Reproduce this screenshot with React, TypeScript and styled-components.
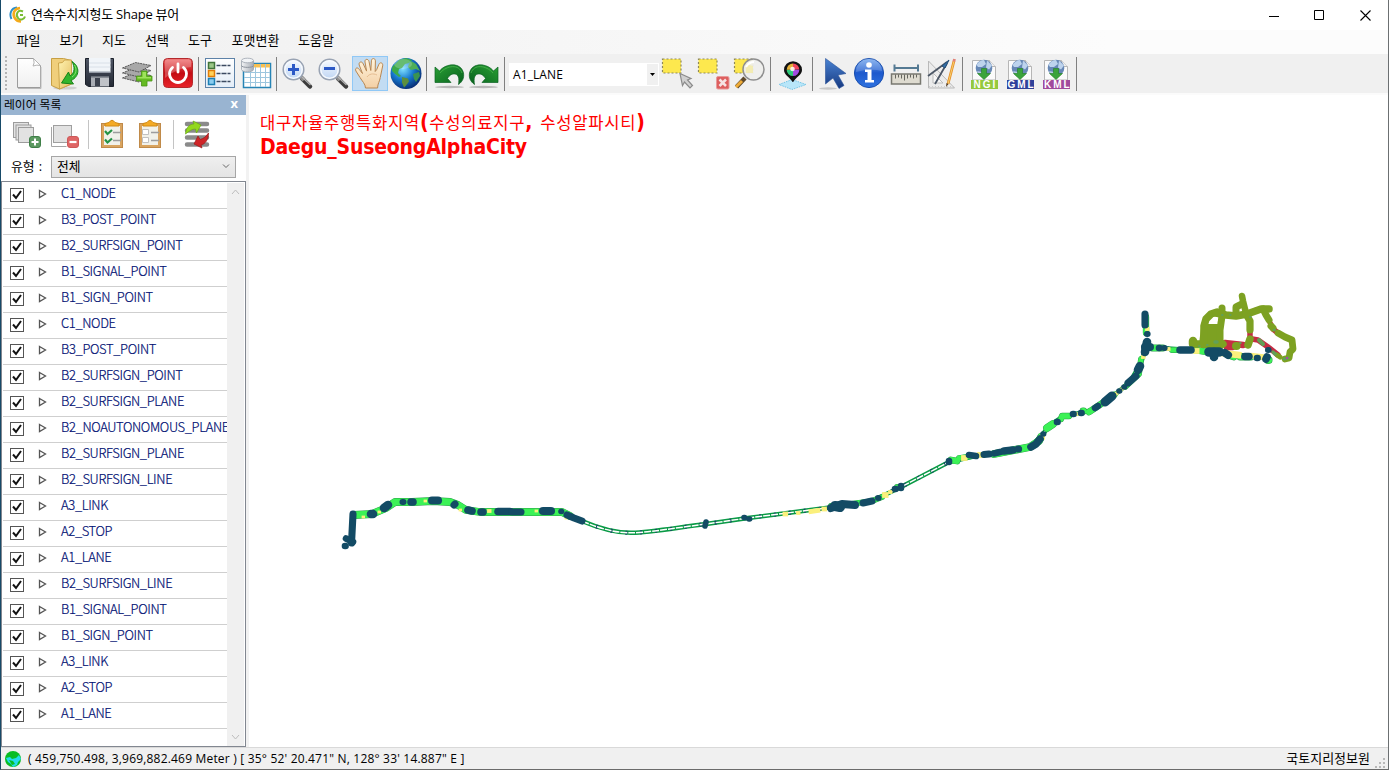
import React from "react";
import styled, { createGlobalStyle } from "styled-components";

const uiFont = `"Open Sans", "Noto Sans CJK KR", sans-serif`;

const GlobalStyle = createGlobalStyle`
  * { box-sizing: border-box; }
  html, body { margin: 0; padding: 0; }
  body { background: #fff; font-family: ${uiFont}; font-size: 12px; color: #000; overflow: hidden; }
  svg { display: block; flex: none; }
`;

const Window = styled.div`
  width: 1389px;
  height: 770px;
  display: flex;
  flex-direction: column;
  background: #fff;
  border-left: 1px solid #174a68;
  border-right: 1px solid #6c7072;
  border-bottom: 1px solid #6b6b6b;
`;

const TitleBar = styled.header`
  height: 30px;
  display: flex;
  align-items: center;
  padding-left: 8px;
`;
const Title = styled.span`
  margin-left: 5px;
  font-size: 13px;
  line-height: 28px;
  height: 30px;
  letter-spacing: -0.25px;
  white-space: nowrap;
`;
const Caption = styled.div`
  margin-left: auto;
  display: flex;
`;
const CaptionButton = styled.div`
  width: 46px;
  height: 28px;
  display: flex;
  align-items: center;
  justify-content: center;
`;

const MenuBar = styled.nav`
  height: 24px;
  display: flex;
  gap: 19px;
  padding-left: 14px;
  font-size: 13px;
  background: linear-gradient(90deg, #f0f0f0, #fcfcfc 80%);
`;
const MenuItem = styled.span<{ $w: number }>`
  width: ${(p) => p.$w}px;
  display: flex;
  justify-content: center;
  line-height: 21px;
  white-space: nowrap;
`;

const ToolBar = styled.div`
  height: 41px;
  display: flex;
  align-items: flex-start;
  padding: 2px 0 0 3px;
  background: #f0f0f0;
  border-bottom: 2px solid #fbfbfb;
`;
const Grip = styled.div`
  width: 3px;
  height: 34px;
  margin: 0 2px 0 1px;
  background: radial-gradient(circle at 1px 1px, #b4b4b4 1px, transparent 1.3px) 0 0 / 3px 4px;
`;
const ToolButton = styled.div<{ $active?: boolean }>`
  width: 36px;
  height: 35px;
  background: ${(p) => (p.$active ? "#c2dcf3" : "transparent")};
  box-shadow: ${(p) => (p.$active ? "inset 0 0 0 1px #90c8f6" : "none")};
`;
const Separator = styled.div`
  width: 6px;
  height: 35px;
  background: linear-gradient(#808080, #808080) 2px 1px / 1px 34px no-repeat;
`;
const LayerCombo = styled.div`
  width: 150px;
  height: 23px;
  margin: 7px 1px 0;
  padding: 0 0 0 4px;
  display: flex;
  justify-content: space-between;
  line-height: 23px;
  letter-spacing: 0.1px;
  background: #fff;
`;
const ComboArrow = styled.div`
  width: 11px;
  height: 21px;
  margin: 1px 1px 0 0;
  display: flex;
  align-items: center;
  justify-content: center;
  background: #f0f0f0;
`;

const Body = styled.main`
  flex: 1;
  min-height: 0;
  display: flex;
`;
const SidePanel = styled.aside`
  width: 245px;
  display: flex;
  flex-direction: column;
`;
const PanelHeader = styled.div`
  height: 20px;
  display: flex;
  justify-content: space-between;
  padding: 0 8px 0 3px;
  line-height: 19px;
  font-size: 11.8px;
  background: #99b4d1;
`;
const CloseMark = styled.span`
  color: #fff;
  font: bold 13px/17px "Open Sans", sans-serif;
`;
const LayerTools = styled.div`
  height: 41px;
  display: flex;
  padding: 1px 0 0 7px;
`;
const LayerTool = styled.div`
  width: 38px;
  height: 36px;
`;
const LayerToolSeparator = styled.div`
  width: 1px;
  height: 29px;
  margin: 4px 4px 0;
  background: #c4c4c4;
`;
const TypeRow = styled.div`
  height: 25px;
  display: flex;
  padding-left: 10px;
  font-size: 12.8px;
`;
const TypeLabel = styled.span`
  width: 40px;
  line-height: 20px;
  white-space: pre;
  word-spacing: 1px;
`;
const TypeSelect = styled.div`
  width: 185px;
  height: 22px;
  display: flex;
  justify-content: space-between;
  align-items: center;
  padding: 0 5px 3px;
  border: 1px solid #a6a6a6;
  background: linear-gradient(#efefef, #e4e4e4);
`;
const ListBox = styled.div`
  flex: 1;
  min-height: 0;
  display: flex;
  border: 1px solid #828790;
  padding-top: 1px;
`;
const Rows = styled.div`
  flex: 1;
  min-width: 0;
  padding-left: 1px;
  overflow: hidden;
`;
const Row = styled.div`
  height: 26px;
  display: flex;
  border-bottom: 1px solid #cfcfcf;
`;
const CheckBox = styled.span`
  width: 14px;
  height: 14px;
  flex: none;
  margin: 5px 14px 0 7px;
  border: 1px solid #555;
  background: #fff;
`;
const RowName = styled.span`
  margin-left: 14px;
  color: #000f72;
  font: 300 13px/19px "Noto Sans CJK KR", sans-serif;
  -webkit-text-stroke: 0.2px #000f72;
  letter-spacing: -0.36px;
  white-space: nowrap;
`;
const ScrollBar = styled.div`
  width: 17px;
  margin-right: 1px;
  display: flex;
  flex-direction: column;
  justify-content: space-between;
  align-items: center;
  padding: 6px 0;
  background: #f0f0f0;
`;
const Splitter = styled.div`
  width: 3px;
  background: #f2f2f2;
`;
const MapPane = styled.section`
  position: relative;
  flex: 1;
  min-width: 0;
`;
const MapTitle = styled.div`
  position: absolute;
  left: 11px;
  top: 15px;
  color: #f00;
  white-space: nowrap;
`;
const KoreanTitle = styled.div`
  height: 25px;
  font: 16.6px/25px "Noto Sans CJK KR", sans-serif;
  letter-spacing: 0.72px;
`;
const Punct = styled.b`
  font: bold 21px/25px "DejaVu Sans Condensed", "DejaVu Sans", sans-serif;
`;
const LatinTitle = styled.div`
  font: bold 21px/25px "DejaVu Sans Condensed", "DejaVu Sans", sans-serif;
  letter-spacing: -0.2px;
`;
const StatusBar = styled.footer`
  height: 22px;
  display: flex;
  align-items: flex-start;
  padding: 0 2px 0 4px;
  background: #f0f0f0;
  border-top: 1px solid #d9d9d9;
  line-height: 21px;
`;
const Coordinates = styled.span`
  margin-left: 7px;
  letter-spacing: 0.19px;
  white-space: pre;
`;
const Agency = styled.span`
  margin-left: auto;
  margin-right: 3px;
  font-size: 13px;
  line-height: 20px;
  white-space: nowrap;
`;

const G = ({ id, stops, x2 = 0, y2 = 1 }: { id: string; stops: string[]; x2?: number; y2?: number }) => (
  <linearGradient id={id} x1="0" y1="0" x2={x2} y2={y2}>
    {stops.map((c, i) => (
      <stop key={i} offset={i / (stops.length - 1)} stopColor={c} />
    ))}
  </linearGradient>
);
const Icon = ({ children }: { children: React.ReactNode }) => (
  <svg width="36" height="35" viewBox="0 0 36 35">{children}</svg>
);

const NewIcon = () => (
  <Icon>
    <G id="page" stops={["#ffffff", "#f0f0f0"]} />
    <path d="M7.5 2.5h16l7 7v22h-23z" fill="url(#page)" stroke="#9c9c9c" />
    <path d="M8 32.5h23V11" fill="none" stroke="#bbb" />
    <path d="M23.5 2.5q1.5 5-.5 7.5 4-1.500 7.500-.5z" fill="#fff" stroke="#b4b4b4" />
  </Icon>
);
const OpenIcon = () => (
  <Icon>
    <G id="fold" stops={["#fff3b0", "#e3bd62"]} x2={1} />
    <ellipse cx="19" cy="32" rx="12" ry="1.600" fill="#cfcfcf" />
    <path d="M5.500 2.500h12l8 2V28l-12 5-8-3.500z" fill="#f0cf7b" stroke="#c79f43" />
    <path d="M12.500 7l4-.5 2-2.500 7 0V28l-12 5z" fill="url(#fold)" stroke="#cda64c" />
    <path d="M26 5.500c8 5 8 15-1 19l2.500 3.500-12-1 7-11 1.500 4c5-3 5-9 2-14.500z" fill="#32b52d" stroke="#178319" />
    <path d="M28.500 9c2.500 4 2 9-2.500 12" fill="none" stroke="#85e36d" />
  </Icon>
);
const SaveIcon = () => (
  <Icon>
    <G id="disk" stops={["#4e5564", "#252a35"]} />
    <path d="M3.500 2.500h28v28h-25l-3-2z" fill="url(#disk)" stroke="#1b202a" />
    <path d="M7 2h21.500v14.500H7z" fill="#f1f5f9" />
    <path d="M7 7h21.500M7 11h21.500" stroke="#d9e0e8" />
    <path d="M7 16h21.500" stroke="#8f98a5" />
    <path d="M9 20h18v10.500H9z" fill="#a9adb4" />
    <path d="M9 20h18v1.500H9z" fill="#696f79" />
    <path d="M13 22h5v8h-5z" fill="#3b414d" />
    <path d="M18 22h9v8h-9z" fill="#d0d2d5" opacity=".6" />
  </Icon>
);
const AddLayerIcon = () => (
  <Icon>
    {[18, 13, 8].map((y) => (
      <path key={y} d={`M4.500 ${y + 4}l13-5.500 15.500 3-12 6.500z`} fill="#a8a8a8" stroke="#4b4b4b" strokeWidth=".9" strokeDasharray="2 .7" />
    ))}
    <path d="M23.500 15h5.500v5h5v5h-5v5h-5.500v-5h-5v-5h5z" fill="#65bb22" stroke="#4a9317" strokeWidth=".8" />
    <path d="M24.500 16h3.500v5h5v1.500H19.500V21h5z" fill="#9ee35b" />
  </Icon>
);
const PowerIcon = () => (
  <Icon>
    <G id="power" stops={["#f06a6a", "#c40b12", "#e8242a"]} />
    <rect x="3.500" y="2.500" width="29" height="29" rx="4" fill="url(#power)" stroke="#b4292c" />
    <path d="M5 5q0-1.500 2-1.500h22q2 0 2 2V11Q17 12 5 22z" fill="#fff" opacity=".25" />
    <path d="M12.500 11.500a8.500 8.500 0 1 0 11 0" fill="none" stroke="#fff" strokeWidth="2.800" strokeLinecap="round" />
    <path d="M18 8v8" stroke="#fff" strokeWidth="2.800" strokeLinecap="round" />
  </Icon>
);
const LegendIcon = () => (
  <Icon>
    <G id="legend" stops={["#ffffff", "#e3edf8"]} />
    <rect x="3.500" y="2.500" width="29" height="29" fill="url(#legend)" stroke="#5d82a8" />
    {[
      [6, "#41743a", "#9bc687"],
      [14, "#e17d09", "#ffd25b"],
      [22, "#1d80b4", "#8bcdf0"],
    ].map(([y, a, b]) => (
      <g key={y as number}>
        <rect x="6.500" y={(y as number) + 0.5} width="6" height="6" fill={b as string} stroke={a as string} strokeWidth="1.500" />
        <path d={`M14.500 ${(y as number) + 3.500}h4m1 0h5m1 0h3`} stroke="#3b4a61" strokeWidth="1.300" />
      </g>
    ))}
  </Icon>
);
const TableIcon = () => (
  <Icon>
    <path d="M5.500 7.500h27v24h-27z" fill="#fff" stroke="#2784b5" strokeWidth="1.500" />
    <path d="M6 8h26v3.500H6z" fill="#f8c052" />
    <path d="M6 16.500h26M6 21.500h26M6 26.500h26M12.500 11v20M17.500 11v20M22.500 8v23M27.500 8v23" stroke="#9dc6de" />
    <G id="cyl" stops={["#f2f3f5", "#a6acb5"]} x2={1} y2={0} />
    <path d="M3.500 5v8.500c0 3 12 3 12 0V5z" fill="url(#cyl)" stroke="#9ca3ad" strokeWidth=".8" />
    <path d="M3.500 9.500c0 2.500 12 2.500 12 0" fill="none" stroke="#8c939d" />
    <ellipse cx="9.500" cy="4.500" rx="6" ry="2.300" fill="#f2f4f7" stroke="#9ca3ad" strokeWidth=".8" />
  </Icon>
);
const ZoomIcon = ({ plus }: { plus?: boolean }) => (
  <Icon>
    <G id="lens" stops={["#f8fbff", "#bdd4f3"]} />
    <path d="M22 22.500l8 8" stroke="#3c3c3c" strokeWidth="4.500" strokeLinecap="round" />
    <path d="M20.500 20.500l3.500 3.500" stroke="#8d8d8d" strokeWidth="4" />
    <path d="M22 21l8.500 8" stroke="#b5b5b5" strokeWidth="1.200" />
    <circle cx="13.500" cy="13.500" r="10.300" fill="url(#lens)" stroke="#99a3b3" strokeWidth="1.500" />
    <circle cx="13.500" cy="13.500" r="8.700" fill="none" stroke="#f6f9fd" strokeWidth="1.400" />
    <path d={plus ? "M13.500 8v11M8 13.500h11" : "M8 12.500h11"} stroke="#2c59c6" strokeWidth="3" />
  </Icon>
);
const HandIcon = () => (
  <Icon>
    <G id="hand" stops={["#fff4dd", "#f3cfa5"]} />
    <path
      d="M12 32c0-4-3.500-7-5.500-10.500L2.400 15c-1.300-3 1.500-4.200 3.300-1.700l3.300 4.200L5.700 9c-.9-3 2.600-4.400 4-1.200l3.400 7.300L11.500 6c-.5-3.300 3.300-3.600 4-.5l1.800 9 .6-9.700c.3-3.200 3.900-2.800 4 0l-.2 10.700 1.500-2 2-4.700c1-3.200 4.500-2.300 4 1l-2.400 11.700c-.6 4-2.700 6-2.700 10.500z"
      fill="url(#hand)" stroke="#b88752" strokeWidth="1" transform="translate(1.500)"
    />
    <path d="M15 21c2-3 6-4 10-2" fill="none" stroke="#e0b486" strokeWidth=".8" />
  </Icon>
);
const GlobeIcon = () => (
  <Icon>
    <radialGradient id="globe" cx=".4" cy=".35" r=".7">
      <stop offset="0" stopColor="#82e2ff" />
      <stop offset=".5" stopColor="#1779cf" />
      <stop offset="1" stopColor="#06266c" />
    </radialGradient>
    <circle cx="18" cy="17.500" r="15.500" fill="url(#globe)" />
    <path d="M5 10l6-6 7-2 6 2-3 3-4 1-3 4-3 1-1 4 3 3-2 1-5-4-2-2 0-3z" fill="#3caa4a" />
    <path d="M23 5l5 3 4 7-4-2-5 1-3-3 1-3z" fill="#4fae57" />
    <path d="M14 21l6 1.500 1 3-3 4-2 2-2-5z" fill="#5c8f3e" />
    <path d="M25 18l6-2 1 4-4 6-2-3z" fill="#3a9351" />
    <ellipse cx="15" cy="8" rx="9" ry="5" fill="#fff" opacity=".22" />
  </Icon>
);
const TurnIcon = ({ redo }: { redo?: boolean }) => (
  <Icon>
    <G id="turn" stops={["#2aa035", "#07601d"]} x2={1} />
    <g transform={redo ? "translate(36 0) scale(-1 1)" : "translate(1 0)"}>
      <ellipse cx="18.500" cy="31" rx="14.500" ry="1.200" fill="#b9b9b9" />
      <path d="M4 11l4.500 4C15 7 30 6 32.500 17c.8 5-1 8.500-5 11.500 1-6 0-10-3.500-10.500-3-.5-5.500 1-7.500 4.500l3.500 4H4z" fill="url(#turn)" stroke="#0b6322" strokeWidth=".7" />
      <path d="M9 17C16 9 28 8 31 17" fill="none" stroke="#4db54f" strokeWidth=".8" />
    </g>
  </Icon>
);
const SelectRect = () => (
  <rect x="2.500" y="3" width="18.500" height="14" fill="#fde84e" stroke="#8f8958" strokeWidth="1.200" strokeDasharray="2 2" />
);
const SelectIcon = () => (
  <Icon>
    <SelectRect />
    <path d="M20 17.500l11 5-3.500 1.500 5 5.500-2.500 2.500-5.500-6-2 3.500z" fill="#d0d0d0" stroke="#8b8b8b" strokeWidth="1.200" />
  </Icon>
);
const DeselectIcon = () => (
  <Icon>
    <SelectRect />
    <rect x="20.500" y="20.500" width="12.500" height="12.500" rx="1.500" fill="#dd5f5f" stroke="#e89a9a" />
    <path d="M23.500 23.500l6.500 6.500m0-6.500l-6.500 6.500" stroke="#f6e4e4" strokeWidth="2.500" />
  </Icon>
);
const FindIcon = () => (
  <Icon>
    <SelectRect />
    <path d="M13 22l-8.500 9" stroke="#5f4a2c" strokeWidth="4.500" />
    <path d="M10 25l-6 6" stroke="#efac38" strokeWidth="3" />
    <circle cx="21.500" cy="13.500" r="10.500" fill="#efefed" fillOpacity=".93" stroke="#8f8f8f" strokeWidth="1.500" />
    <path d="M14 8q3 1 7 2v7h-7z" fill="#f5e98c" opacity=".55" />
    <path d="M14 11q3-5 8-5" stroke="#fff" strokeWidth="2" fill="none" />
  </Icon>
);
const PinIcon = () => (
  <Icon>
    <path d="M5 28.500l13-5 14 5-14 5z" fill="#b8e6f9" stroke="#74c4e6" strokeDasharray="1.500 1" />
    <path d="M18.600 26c-3-5-8.600-7-8.600-12a9 8.700 0 0 1 18 0C28 19 22 21 19.200 26z" fill="#111" />
    <g strokeWidth="6" fill="none">
      <path d="M19 10.500a3.300 3.300 0 0 1 3.300 3.200" stroke="#f0465d" />
      <path d="M22.300 13.700A3.300 3.300 0 0 1 19 17" stroke="#a34ce0" />
      <path d="M19 17a3.300 3.300 0 0 1-3.300-3.300" stroke="#2ec878" />
      <path d="M15.700 13.700A3.300 3.300 0 0 1 19 10.400" stroke="#e6b23b" />
    </g>
    <circle cx="18.500" cy="13" r="2.300" fill="#fff" opacity=".85" />
  </Icon>
);
const ArrowIcon = () => (
  <Icon>
    <G id="arrow" stops={["#4a83d3", "#173a81"]} />
    <ellipse cx="12" cy="32.500" rx="9" ry="1.200" fill="#c7c7c7" />
    <path d="M9.500 2.500l20.500 15-8 1.500 6 10.500-5 3-6-10.500-7.500 6z" fill="url(#arrow)" stroke="#2a5299" strokeWidth=".6" />
  </Icon>
);
const InfoIcon = () => (
  <Icon>
    <G id="info" stops={["#75a9ee", "#1d59cd", "#2f73e0"]} />
    <circle cx="17" cy="17" r="14.600" fill="url(#info)" stroke="#1b4fae" />
    <path d="M4 16a13 13 0 0 1 26-1q-12-3-26 1z" fill="#fff" opacity=".18" />
    <circle cx="17" cy="9" r="2.800" fill="#fff" />
    <path d="M13 13.500h6.500v10.500h2.500v2.500h-9V24h2.500v-8H13z" fill="#fff" />
  </Icon>
);
const RulerIcon = () => (
  <Icon>
    <path d="M6.500 8.500v7M30 8.500v7M6 12h24" stroke="#557a93" strokeWidth="2" />
    <path d="M3.500 18h29v10h-29z" fill="#dedbd0" stroke="#787870" strokeWidth="1.500" />
    <path d="M7.500 18.500v4m3-4v3m3-3v4m3-4v6m3-6v4m3-4v3m3-3v4m3-4v3" stroke="#66665f" />
  </Icon>
);
const DraftIcon = () => (
  <Icon>
    <path d="M4.500 5v27h26z" fill="#ececec" stroke="#b9b9b9" />
    <path d="M9 17v10h10z" fill="#f7f7f7" stroke="#bbb" />
    <path d="M5 30.500h25" stroke="#ccc" strokeDasharray="1 2" />
    <path d="M23 6L4 20M23 7L11 28" stroke="#4c5766" strokeWidth="1.800" />
    <path d="M25 4l-7 6 3 2z" fill="#3571aa" stroke="#244c75" />
    <path d="M30 5l-6 23" stroke="#e6932b" strokeWidth="2.800" />
    <path d="M30 5l-6 23" stroke="#f8cf70" strokeWidth="1" />
    <path d="M30.500 3l-.6 2.500" stroke="#e28378" strokeWidth="2.800" />
    <path d="M22.500 27l-.5 4 2.500-3z" fill="#503820" />
  </Icon>
);
const ExportLabel = styled.text`
  font: bold 10px "Liberation Sans", sans-serif;
  letter-spacing: 2px;
  fill: #fff;
`;
const ExportIcon = ({ name, color, x = 6.5 }: { name: string; color: string; x?: number }) => (
  <Icon>
    <path d="M6.500 4.500h17l6 6V24h-23z" fill="#fbfbfb" stroke="#b6b6b6" />
    <path d="M23.500 4.500v6h6" fill="#eee" stroke="#b6b6b6" />
    <circle cx="18" cy="12" r="8.300" fill="#6687b5" />
    <path d="M10.500 9q3-5 7.500-5l2 4-4 3-4 0zM21 4.500l5 5-3 4-3-2z" fill="#bdd3ed" />
    <path d="M11 15l5 1 2 3-5-1z" fill="#b5cbe4" />
    <path d="M15.500 12.500h5v5h4L18 23.500l-6.500-6h4z" fill="#3ba33b" stroke="#218021" strokeWidth=".6" />
    <rect x="5" y="24" width="27" height="9" fill={color} />
    <ExportLabel x={x} y="32">{name}</ExportLabel>
  </Icon>
);

const Sheets = ({ count }: { count: number }) => (
  <g fill="#e2e2e2" stroke="#9c9c9c">
    {Array.from({ length: count }, (_, i) => (
      <rect key={i} x={5.5 + i * 2.500} y={6.5 + i * 2.500} width="15" height="15" />
    ))}
  </g>
);
const Clipboard = ({ checked }: { checked?: boolean }) => (
  <svg width="38" height="36" viewBox="0 0 38 36">
    <rect x="8.500" y="7.500" width="21" height="24" fill="#d9a45f" stroke="#c08a49" />
    <rect x="11" y="10" width="16" height="19" fill="#f1f1ea" />
    <path d="M12 10V7.500l4-1q3-4.500 6 0l4 1V10z" fill="#f4aa25" stroke="#d18a17" />
    <path d="M20 16.500h8M20 24.500h8" stroke="#9d9d9d" strokeWidth="1.600" />
    {checked ? (
      <path d="M12 15l2.500 3 4.500-4M12 23.500l2.500 3 4.500-4" fill="none" stroke="#259345" strokeWidth="2.200" />
    ) : (
      <path d="M11.500 13.500h6v5h-6zM11.500 21.500h6v5h-6z" fill="#fff" stroke="#c1c1c1" />
    )}
  </svg>
);
const SideIcon = ({ children }: { children: React.ReactNode }) => (
  <svg width="38" height="36" viewBox="0 0 38 36">{children}</svg>
);

type Mark = [string, number?];
const green: Mark[] = [
  ["354,515 372,514 386,508 395,502 412,502 433,501 450,502 458,505 466,510 480,512 562,512 570,516", 6],
  ["831,506 850,504 872,501 882,497", 4], ["897,487", 4], ["951,460 957,461"], ["959,458 973,456", 4],
  ["994,454 1030,447 1039,441 1041,437", 6], ["1047,428 1053,424", 6], ["1061,419 1062,416 1069,416", 4.5],
  ["1083,411"], ["1089,412 1101,404 1114,395"], ["1125,387 1139,374 1141,359", 4], ["1146,333 1146,317", 4.5], ["1152,348 1163,348"],
  ["1172,350 1180,350", 4], ["1195,350 1207,352"], ["1228,355 1234,357"], ["1240,357 1251,357"], ["1268,360", 6],
];
const yellow: Mark[] = [
  ["363,517", 2], ["379,512", 2], ["425,501", 2], ["460,510", 2], ["489,511", 3], ["536,511", 2], ["566,518", 2],
  ["785,514", 4], ["798,513", 3], ["811,511.500 818,510.500", 4], ["824,509", 4], ["885,495"], ["890,492", 3], ["964,458"],
  ["980,455"], ["991,454", 3], ["1042,437", 4], ["1077,414", 3], ["1117,393 1122,389", 3], ["1143,357", 3], ["1147,329", 3],
  ["1168,349", 3], ["1196,351"], ["1223,353 1238,355", 6], ["1253,356 1263,357"],
];
const navy: Mark[] = [
  ["353,514 351.500,543", 5.5], ["346,538.500 353,542", 5], ["345,546", 5], ["371,514 373,514", 7], ["384,508 388,505", 7],
  ["402.500,502 403.500,502", 4.5], ["411,502 413,502", 6], ["432,500.500 438,500.500", 6.5], ["454,505 455,504", 5.5],
  ["468,510 472,511", 6], ["481,512 483,512", 6], ["498,511.500 510,511.500", 6], ["512,512 521,512", 5.5],
  ["543,511 551,511", 6.500], ["561,511.500", 4], ["567,515 574,518 582,521", 5.5], ["706,522 705,526", 4], ["744,517.500", 4], ["749,519", 4],
  ["831,508 842,504 855,505", 6.5], ["835,506 840,507", 8.5], ["863,503 872,501", 5.500], ["878,498", 4.5], ["895,489", 5], ["901,486 901,488", 5],
  ["949,462 949,461"], ["969,455 976,456"], ["984,454.500 989,454", 5.5], ["994,453.500 1000,452"], ["1004,451 1013,450", 6],
  ["1018,449", 5.5], ["1031,447 1036,444 1040,439", 6], ["1043,434", 4], ["1057,422"], ["1073,414"], ["1081,413"],
  ["1095,408 1098,406"], ["1105,402 1112,396", 7.5], ["1119,391", 4], ["1124,387", 4], ["1128,383 1136,376", 5.5], ["1138,370 1140,366", 7],
  ["1145,352 1147,342", 7], ["1145,347 1150,347", 6.500], ["1147,334", 4.5], ["1145,325 1145,314", 5.5],
  ["1159,348"], ["1164,348", 4.5], ["1180,350 1191,350", 6], ["1209,352 1219,352", 8], ["1214,352 1214,357", 7],
  ["1225,353 1228,355", 6.500], ["1245,356.500 1249,356.500", 6], ["1257,358", 5], ["1266,359 1267,357", 6], ["1268,350", 4.5],
];
const olive: Mark[] = [
  ["1193,344 1193,341", 6.5], ["1194,344 1204,344 1204,326 1206,319 1211,314 1217,312", 5.5],
  ["1222,308 1222,316 1220,330 1220,344", 5], ["1216,313 1226,315 1236,316 1247,314 1261,309 1269,309", 5.5], ["1242,296 1243,301 1246,313", 4.5],
  ["1236,313 1236,307 1242,304", 5], ["1246,314 1250,321 1250,330", 5.2], ["1250,339 1248,345", 5.500],
  ["1263,309 1266,315 1269,320", 5], ["1271,326 1273,328", 5], ["1278,333 1285,337 1292,340 1293,349 1290,352 1289,358 1285,359", 4.8],
  ["1280,357 1277,355", 3], ["1220,346 1223,344", 5.5], ["1236,346", 6],
];
const red: Mark[] = [
  ["1256,310 1260,309", 4.500], ["1269,321 1272,326", 4.5], ["1273,329 1278,333", 5], ["1250,329 1250,337", 5],
  ["1252,339 1258,340 1268,347 1278,355", 5], ["1225,343 1243,345", 6], ["1226,348 1233,348", 4],
];
const sage: Mark[] = [
  ["1259,340 1263,344", 4], ["1215,342 1217,342", 3.5], ["1240,343", 2], ["1273,352 1275,354", 3.5], ["1222,315", 2],
  ["1230,315", 2], ["1250,317", 2], ["1274,330", 2.5], ["1284,359 1288,358", 3], ["1199,346", 2], ["1207,345", 2],
];
const Marks = ({ data, color, grow = 0, cap = "round" }: { data: Mark[]; color: string; grow?: number; cap?: "round" | "square" }) => (
  <g fill="none" stroke={color} strokeLinecap={cap} strokeLinejoin="round">
    {data.map(([pts, w = 5], i) => {
      const p = pts.includes(" ") ? pts : `${pts} ${pts.replace(/^(\d+(?:\.\d+)?)/, (v) => String(Number(v) + 0.6))}`;
      return <polyline key={i} points={p} strokeWidth={w + grow} />;
    })}
  </g>
);
const ROUTE =
  "M582 521C603 530 618 533 632 532.800C648 532.500 668 529 706 524L748 518 830 507.500 872 501 901 487 949 462 980 455 1030 447 1043 434 1050 425 1062 417 1093 410 1112 397 1130 382 1141 363 1146 347 1190 350 1268 358";
const MapView = () => (
  <svg width="1139" height="652" viewBox="249 95 1139 652">
    <g fill="none" strokeLinejoin="round">
      <path d={ROUTE} stroke="#0a9a46" strokeWidth="4.500" />
      <path d={ROUTE} stroke="#174a63" strokeWidth="4" strokeDasharray="2 13" />
      <path d={ROUTE} stroke="#fff" strokeWidth="1.500" strokeDasharray="7 1" />
    </g>
    <Marks data={green} color="#2a9d4b" grow={1.8} />
    <Marks data={green} color="#3cf256" grow={1} />
    <Marks data={yellow} color="#fbf07c" cap="square" grow={0.8} />
    <Marks data={red} color="#c52d43" grow={0.5} />
    <path d="M1201 328l3-4 17 0 2 4-1 20h-21l-2-4z" fill="#7da122" />
    <Marks data={olive} color="#7da122" grow={2} />
    <Marks data={sage} color="#62a057" />
    <path d="M1212 320.500l3-2.500h2.500v3l-4 1.500z" fill="#fff" />
    <circle cx="1287" cy="358" r="1" fill="#c431b4" />
    <Marks data={navy} color="#134b65" grow={1.6} />
  </svg>
);

const layers = [
  "C1_NODE", "B3_POST_POINT", "B2_SURFSIGN_POINT", "B1_SIGNAL_POINT", "B1_SIGN_POINT", "C1_NODE", "B3_POST_POINT",
  "B2_SURFSIGN_POINT", "B2_SURFSIGN_PLANE", "B2_NOAUTONOMOUS_PLANE", "B2_SURFSIGN_PLANE", "B2_SURFSIGN_LINE", "A3_LINK",
  "A2_STOP", "A1_LANE", "B2_SURFSIGN_LINE", "B1_SIGNAL_POINT", "B1_SIGN_POINT", "A3_LINK", "A2_STOP", "A1_LANE",
];
const menus: [string, number][] = [
  ["파일", 27], ["보기", 21], ["지도", 26], ["선택", 22], ["도구", 26], ["포맷변환", 47], ["도움말", 36],
];
const toolGroups: React.ReactNode[][] = [
  [<NewIcon />, <OpenIcon />, <SaveIcon />, <AddLayerIcon />],
  [<PowerIcon />],
  [<LegendIcon />, <TableIcon />],
  [<ZoomIcon plus />, <ZoomIcon />, <HandIcon />, <GlobeIcon />],
  [<TurnIcon />, <TurnIcon redo />],
  [<SelectIcon />, <DeselectIcon />, <FindIcon />],
  [<PinIcon />],
  [<ArrowIcon />, <InfoIcon />, <RulerIcon />, <DraftIcon />],
  [<ExportIcon name="NGI" color="#95c93d" x={7.5} />, <ExportIcon name="GML" color="#30419b" x={5.5} />, <ExportIcon name="KML" color="#a14a9c" x={6} />],
];

export default function App() {
  return (
    <Window>
      <GlobalStyle />
      <TitleBar>
        <svg width="17" height="18" viewBox="0 0 17 18" fill="none">
          <path d="M8 1.500C2 2 0 8 2.500 13" stroke="#2d8fcb" strokeWidth="2" />
          <path d="M11 2C5 2.500 3 8 6 12.500q2 3 6 3" stroke="#f4aa1b" strokeWidth="2.500" />
          <path d="M14 5.500c-5-2.500-8 3-5 6.500 2 2.500 6 2 7-1.500M11 9h3" stroke="#79bd32" strokeWidth="2" />
        </svg>
        <Title>연속수치지형도 Shape 뷰어</Title>
        <Caption>
          <CaptionButton><svg width="11" height="11"><path d="M1 6.500h10" stroke="#000" /></svg></CaptionButton>
          <CaptionButton><svg width="11" height="11"><path d="M.5.500h9v9h-9z" fill="none" stroke="#000" /></svg></CaptionButton>
          <CaptionButton><svg width="11" height="11"><path d="M.5.5l10 10m0-10l-10 10" stroke="#000" strokeWidth="1.100" /></svg></CaptionButton>
        </Caption>
      </TitleBar>
      <MenuBar>
        {menus.map(([name, w]) => <MenuItem key={name} $w={w}>{name}</MenuItem>)}
      </MenuBar>
      <ToolBar>
        <Grip />
        {toolGroups.map((group, gi) => (
          <React.Fragment key={gi}>
            {gi === 5 && (
              <LayerCombo>
                A1_LANE
                <ComboArrow><svg width="5" height="3"><path d="M0 0h5L2.500 3z" /></svg></ComboArrow>
              </LayerCombo>
            )}
            {group.map((icon, i) => <ToolButton key={i} $active={gi === 3 && i === 2}>{icon}</ToolButton>)}
            <Separator />
          </React.Fragment>
        ))}
      </ToolBar>
      <Body>
        <SidePanel>
          <PanelHeader>레이어 목록<CloseMark>x</CloseMark></PanelHeader>
          <LayerTools>
            <LayerTool>
              <SideIcon>
                <Sheets count={3} />
                <rect x="21.500" y="20.500" width="11" height="11" rx="2.500" fill="#5c9961" stroke="#3f7f48" />
                <path d="M27 22.500v7M23.500 26h7" stroke="#fff" strokeWidth="2" />
              </SideIcon>
            </LayerTool>
            <LayerTool>
              <SideIcon>
                <path d="M5.500 11v19.500h15" fill="none" stroke="#a5a5a5" />
                <rect x="7.500" y="9.500" width="18" height="17" fill="#e2e2e2" stroke="#9f9f9f" />
                <rect x="21.500" y="20.500" width="11" height="11" rx="2.500" fill="#df6666" stroke="#ce5959" />
                <path d="M23.500 26h7" stroke="#fff" strokeWidth="2.200" />
              </SideIcon>
            </LayerTool>
            <LayerToolSeparator />
            <LayerTool><Clipboard checked /></LayerTool>
            <LayerTool><Clipboard /></LayerTool>
            <LayerToolSeparator />
            <LayerTool>
              <SideIcon>
                <path d="M9 8h20M9 14.500h20M9 21.500h20M9 28.500h20" stroke="#8a8a8a" strokeWidth="4.500" strokeLinecap="round" />
                <path d="M7.500 18C8 11 12 8 16 8l-1-3 8 4-4.500 8-1-4c-4 0-6 2-10 5z" fill="#93d81e" stroke="#69aa12" strokeWidth=".7" />
                <path d="M30.500 17c0 7-3.500 11-7.500 12l1 3-8-4 4-8 2 3.500c4-1 6-3 8.500-6.500z" fill="#cf2528" stroke="#961919" strokeWidth=".7" />
              </SideIcon>
            </LayerTool>
          </LayerTools>
          <TypeRow>
            <TypeLabel>유형 :</TypeLabel>
            <TypeSelect>
              전체
              <svg width="8" height="6"><path d="M1 1.500l3 3 3-3" fill="none" stroke="#666" /></svg>
            </TypeSelect>
          </TypeRow>
          <ListBox>
            <Rows>
              {layers.map((name, i) => (
                <Row key={i}>
                  <CheckBox><svg width="12" height="12"><path d="M2 5.500l3 3.500 5-7" fill="none" stroke="#111" strokeWidth="2" /></svg></CheckBox>
                  <svg width="9" height="20"><path d="M1.500 7.500l6 3.500-6 3.500z" fill="none" stroke="#555" strokeWidth="1.300" /></svg>
                  <RowName>{name}</RowName>
                </Row>
              ))}
            </Rows>
            <ScrollBar>
              <svg width="9" height="6"><path d="M1 5l3.500-4L8 5" fill="none" stroke="#bdbdbd" /></svg>
              <svg width="9" height="6"><path d="M1 1l3.500 4L8 1" fill="none" stroke="#bdbdbd" /></svg>
            </ScrollBar>
          </ListBox>
        </SidePanel>
        <Splitter />
        <MapPane>
          <MapView />
          <MapTitle>
            <KoreanTitle>대구자율주행특화지역<Punct>(</Punct>수성의료지구<Punct>, </Punct>수성알파시티<Punct>)</Punct></KoreanTitle>
            <LatinTitle>Daegu_SuseongAlphaCity</LatinTitle>
          </MapTitle>
        </MapPane>
      </Body>
      <StatusBar>
        <svg width="16" height="20" viewBox="0 0 16 20">
          <circle cx="8" cy="11" r="8" fill="#08bd24" />
          <path d="M1 10l4-1 2 2 4-1 3-3 2 4-3 3-1 3-4 2-2-3-3-2z" fill="#23dceb" />
          <path d="M4 12l4 1 2 3-3 1z" fill="#08bd24" />
        </svg>
        <Coordinates>{`( 459,750.498, 3,969,882.469 Meter ) [ 35° 52' 20.471" N, 128° 33' 14.887" E ]`}</Coordinates>
        <Agency>국토지리정보원</Agency>
        <svg width="13" height="20" viewBox="0 0 13 20">
          <path d="M10 10h2v2h-2zM6 14h2v2H6zM10 14h2v2h-2zM2 18h2v2H2zM6 18h2v2H6zM10 18h2v2h-2z" fill="#b8b8b8" />
        </svg>
      </StatusBar>
    </Window>
  );
}
